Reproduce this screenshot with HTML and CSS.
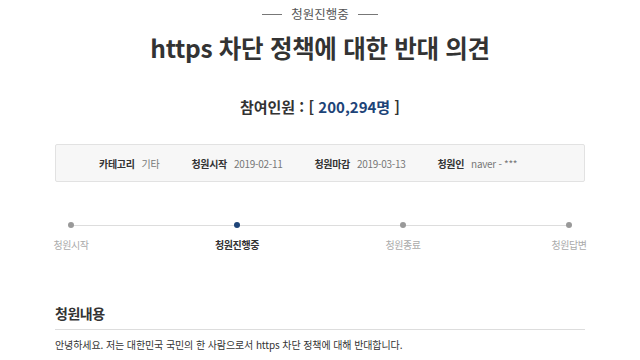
FILE: index.html
```html
<!DOCTYPE html>
<html lang="ko">
<head>
<meta charset="utf-8">
<link rel="stylesheet" href="styles.css">
</head>
<body>
<div class="page">
  <div class="status"><span class="dash"></span><span class="status-text">청원진행중</span><span class="dash"></span></div>
  <h1 class="title">https 차단 정책에 대한 반대 의견</h1>
  <div class="count">참여인원 : [ <span class="num">200,294명</span> ]</div>
  <div class="info">
    <div class="item"><b>카테고리</b><span>기타</span></div>
    <div class="item"><b>청원시작</b><span>2019-02-11</span></div>
    <div class="item"><b>청원마감</b><span>2019-03-13</span></div>
    <div class="item"><b>청원인</b><span>naver - ***</span></div>
  </div>
  <div class="steps">
    <div class="track"></div>
    <div class="step"><i class="dot"></i><span>청원시작</span></div>
    <div class="step active"><i class="dot"></i><span>청원진행중</span></div>
    <div class="step"><i class="dot"></i><span>청원종료</span></div>
    <div class="step"><i class="dot"></i><span>청원답변</span></div>
  </div>
  <h2 class="section">청원내용</h2>
  <p class="content">안녕하세요. 저는 대한민국 국민의 한 사람으로서 https 차단 정책에 대해 반대합니다.</p>
</div>
</body>
</html>
```
FILE: styles.css
```css
* { box-sizing: border-box; }
html, body { margin: 0; padding: 0; background: #fff; }
body { font-family: "Noto Sans CJK KR", "Noto Sans", sans-serif; color: #333; }
.page { width: 530px; margin: 0 auto; padding-top: 4px; }
.status { display: flex; justify-content: center; align-items: center; gap: 9px; height: 20px; }
.dash { width: 20px; height: 1px; background: #777; }
.status-text { font-size: 12.5px; color: #555; line-height: 20px; }
.title { margin: 8px 0 0; text-align: center; font-size: 24.5px; font-weight: 700; color: #333; line-height: 32px; letter-spacing: -0.3px; }
.count { margin-top: 31px; text-align: center; font-size: 15px; font-weight: 700; color: #333; line-height: 24px; }
.count .num { color: #1d4478; }
.info { margin-top: 25px; height: 38px; border: 1px solid #e2e2e2; border-radius: 2px; background: #f7f7f7; display: flex; align-items: center; padding-left: 43px; font-size: 10px; letter-spacing: -0.3px; }
.item { display: flex; gap: 7px; align-items: center; }
.item + .item { margin-left: 32px; }
.item b { font-weight: 700; color: #333; }
.item span { color: #777; }
.steps { position: relative; margin-top: 38px; display: flex; justify-content: space-between; }
.track { position: absolute; left: 16px; right: 16px; top: 5px; height: 1px; background: #ddd; }
.step { position: relative; display: flex; flex-direction: column; align-items: center; width: 32px; }
.dot { display: block; flex-shrink: 0; width: 6px; height: 6px; border-radius: 50%; background: #999; margin-top: 2px; }
.step span { margin-top: 9px; font-size: 10px; letter-spacing: -0.4px; color: #aaa; white-space: nowrap; line-height: 16px; }
.step.active .dot { background: #1d4478; }
.step.active span { color: #333; font-weight: 700; }
.section { margin: 49px 0 0; font-size: 14px; letter-spacing: -0.5px; font-weight: 700; color: #333; line-height: 22px; padding-bottom: 5px; border-bottom: 1px solid #ddd; }
.content { margin: 6px 0 0; font-size: 10px; letter-spacing: -0.1px; color: #333; line-height: 18px; }
```
